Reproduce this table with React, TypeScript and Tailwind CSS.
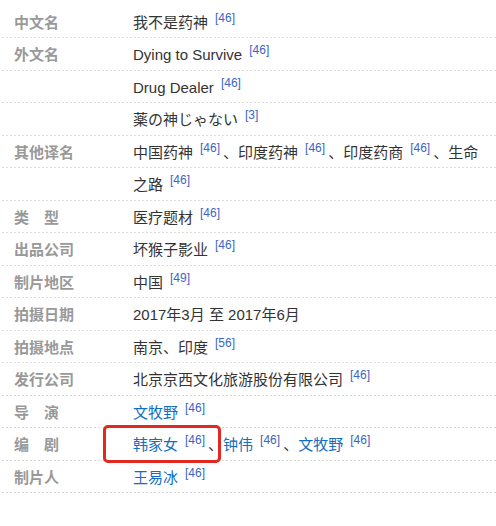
import React from 'react';

type Part = { t: string; link?: boolean; sup?: string };

interface Row {
    label: string;
    parts: Part[];
    mark?: boolean;
}

const rows: Row[] = [
    { label: '中文名', parts: [{ t: '我不是药神', sup: '46' }] },
    { label: '外文名', parts: [{ t: 'Dying to Survive', sup: '46' }] },
    { label: '', parts: [{ t: 'Drug Dealer', sup: '46' }] },
    { label: '', parts: [{ t: '薬の神じゃない', sup: '3' }] },
    {
        label: '其他译名',
        parts: [
            { t: '中国药神', sup: '46' },
            { t: '、印度药神', sup: '46' },
            { t: '、印度药商', sup: '46' },
            { t: '、生命' },
        ],
    },
    { label: '', parts: [{ t: '之路', sup: '46' }] },
    { label: '类\u3000型', parts: [{ t: '医疗题材', sup: '46' }] },
    { label: '出品公司', parts: [{ t: '坏猴子影业', sup: '46' }] },
    { label: '制片地区', parts: [{ t: '中国', sup: '49' }] },
    { label: '拍摄日期', parts: [{ t: '2017年3月 至 2017年6月' }] },
    { label: '拍摄地点', parts: [{ t: '南京、印度', sup: '56' }] },
    { label: '发行公司', parts: [{ t: '北京京西文化旅游股份有限公司', sup: '46' }] },
    { label: '导\u3000演', parts: [{ t: '文牧野', link: true, sup: '46' }] },
    {
        label: '编\u3000剧',
        mark: true,
        parts: [
            { t: '韩家女', link: true, sup: '46' },
            { t: '、' },
            { t: '钟伟', link: true, sup: '46' },
            { t: '、' },
            { t: '文牧野', link: true, sup: '46' },
        ],
    },
    { label: '制片人', parts: [{ t: '王易冰', link: true, sup: '46' }] },
];

const Sup = ({ n }: { n: string }) => (
    <span className="relative top-[-6px] ml-[7px] mr-[3px] text-[12px] leading-none text-[#3b64c4]">[{n}]</span>
);

export default function App() {
    return (
        <div className="w-[496px] h-[526px] bg-white pt-[5.5px] font-['Liberation_Sans','Noto_Sans_CJK_SC',sans-serif]">
            {rows.map((row, i) => (
                <div
                    key={i}
                    className="flex h-[32.5px] items-center pt-[2px] bg-[linear-gradient(to_right,#dcdcdc_50%,transparent_50%)] bg-[length:4px_1px] bg-bottom bg-repeat-x"
                >
                    <div className="w-[133px] shrink-0 pl-[14px] text-[15px] font-bold text-[#999] whitespace-pre">{row.label}</div>
                    <div className="relative flex-1 text-[15px] text-[#333] whitespace-nowrap">
                        {row.mark && (
                            <div className="absolute left-[-30px] top-[-9px] h-[38px] w-[118px] rounded-[5px] border-[3px] border-[#e2291f]" />
                        )}
                        {row.parts.map((p, j) => (
                            <React.Fragment key={j}>
                                <span className={p.link ? 'text-[#136ec2]' : ''}>{p.t}</span>
                                {p.sup && <Sup n={p.sup} />}
                            </React.Fragment>
                        ))}
                    </div>
                </div>
            ))}
        </div>
    );
}
